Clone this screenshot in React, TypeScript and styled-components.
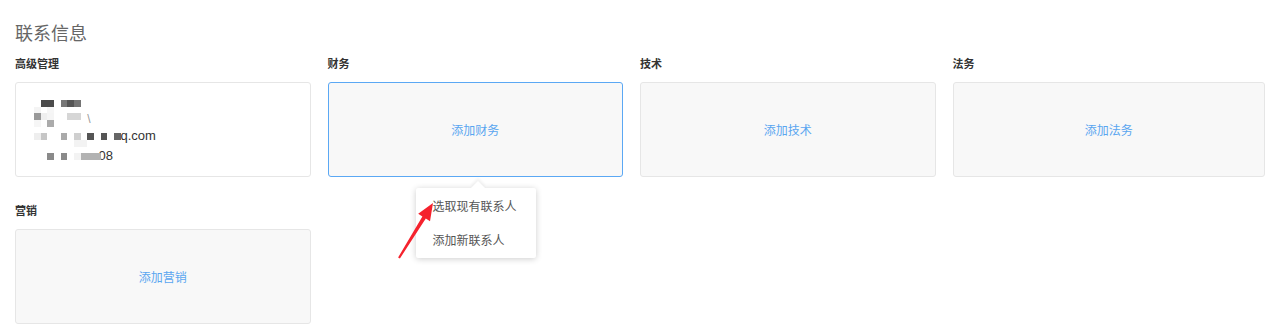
import React from "react";
import styled, { createGlobalStyle } from "styled-components";

const Global = createGlobalStyle`
  html, body { margin: 0; padding: 0; background: #fff; }
  body { font-family: "Noto Sans CJK SC", "Noto Sans", sans-serif; }
`;

const Page = styled.div`
  position: relative;
  padding: 20px 3px 0 15px;
  width: 1268px;
  height: 334px;
  box-sizing: border-box;
  overflow: hidden;
`;

const Title = styled.h2`
  margin: 0 0 10px;
  font-size: 18px;
  line-height: 24px;
  font-weight: 400;
  color: #666;
`;

const Grid = styled.div`
  display: grid;
  grid-template-columns: repeat(4, 1fr);
  row-gap: 24px;
`;

const Section = styled.section<{ $last?: boolean }>`
  padding-right: ${(p) => (p.$last ? "0" : "17px")};
`;

const Label = styled.div`
  font-size: 11px;
  line-height: 18px;
  font-weight: 700;
  color: #333;
  margin-bottom: 10px;
`;

const Card = styled.div<{ $active?: boolean; $plain?: boolean }>`
  position: relative;
  box-sizing: border-box;
  height: 95px;
  border: 1px solid ${(p) => (p.$active ? "#5ba8f4" : "#e6e6e6")};
  border-radius: 3px;
  background: ${(p) => (p.$plain ? "#fff" : "#f8f8f8")};
  display: flex;
  align-items: ${(p) => (p.$plain ? "flex-start" : "center")};
  justify-content: ${(p) => (p.$plain ? "flex-start" : "center")};
  padding: ${(p) => (p.$plain ? "17px 0 0 18px" : "0")};
`;

const AddText = styled.span`
  font-size: 12px;
  color: #5aa6f0;
  cursor: pointer;
`;

const Mosaic = styled.div`
  display: grid;
  grid-template-columns: repeat(20, 6.667px);
  grid-template-rows: repeat(10, 6.667px);
`;

const Cell = styled.span<{ $c: string }>`
  background: ${(p) => p.$c};
`;

const MaskText = styled.span<{ $shift?: number }>`
  font-family: "Liberation Sans", Arial, sans-serif;
  font-size: 13px;
  line-height: 6.667px;
  white-space: nowrap;
  color: #333;
  margin-left: ${(p) => p.$shift ?? 0}px;
`;

const Stroke = styled.span`
  font-family: "Liberation Sans", Arial, sans-serif;
  font-size: 12px;
  line-height: 13px;
  color: #999;
`;

const Popover = styled.div`
  position: absolute;
  left: 87px;
  top: 105px;
  width: 120px;
  padding: 1px 0;
  background: #fff;
  border-radius: 2px;
  box-shadow: 0 1px 6px rgba(0, 0, 0, 0.2);
  z-index: 5;
  &::before {
    content: "";
    position: absolute;
    top: -5px;
    left: 57px;
    width: 10px;
    height: 10px;
    background: #fff;
    transform: rotate(45deg);
    box-shadow: -2px -2px 3px rgba(0, 0, 0, 0.06);
  }
`;

const MenuItem = styled.div`
  position: relative;
  height: 34px;
  line-height: 34px;
  padding-left: 17px;
  font-size: 12px;
  color: #555;
  cursor: pointer;
  white-space: nowrap;
`;

const Pointer = styled.svg`
  position: absolute;
  left: 395px;
  top: 198px;
  z-index: 10;
`;

type C = [number, number, number, string];
const cells: C[] = [
  [0, 1, 2, "#4b4b4b"],
  [0, 4, 1, "#777"],
  [0, 5, 1, "#555"],
  [0, 6, 1, "#747474"],
  [1, 0, 1, "#f4f4f4"],
  [1, 2, 1, "#f6f6f6"],
  [2, 0, 1, "#999"],
  [2, 1, 1, "#efefef"],
  [2, 2, 1, "#f5f5f5"],
  [2, 5, 2, "#d6d6d6"],
  [3, 0, 1, "#f6f6f6"],
  [3, 2, 1, "#ababab"],
  [5, 0, 1, "#eee"],
  [5, 1, 1, "#c6c6c6"],
  [5, 4, 1, "#aaa"],
  [5, 6, 1, "#cfcfcf"],
  [5, 8, 1, "#555"],
  [5, 10, 1, "#555"],
  [5, 12, 1, "#666"],
  [6, 6, 2, "#f3f3f3"],
  [8, 2, 1, "#8a8a8a"],
  [8, 4, 1, "#8a8a8a"],
  [8, 6, 1, "#f3f3f3"],
  [8, 7, 3, "#b2b2b2"],
];

const groups = [
  { label: "财务", add: "添加财务" },
  { label: "技术", add: "添加技术" },
  { label: "法务", add: "添加法务" },
];

export default function App() {
  return (
    <Page>
      <Global />
      <Title>联系信息</Title>
      <Grid>
        <Section>
          <Label>高级管理</Label>
          <Card $plain>
            <Mosaic>
              <MaskText style={{ gridColumn: "14 / span 6", gridRow: 6 }}>q.com</MaskText>
              <MaskText $shift={-2} style={{ gridColumn: "11 / span 4", gridRow: 9 }}>08</MaskText>
              <Stroke style={{ gridColumn: "9 / span 2", gridRow: "3 / span 2" }}>\</Stroke>
              {cells.map(([r, c, s, col], i) => (
                <Cell
                  key={i}
                  $c={col}
                  style={{ gridRow: r + 1, gridColumn: `${c + 1} / span ${s}` }}
                />
              ))}
            </Mosaic>
          </Card>
        </Section>
        {groups.map((g, i) => (
          <Section key={g.label} $last={i === 2}>
            <Label>{g.label}</Label>
            <Card $active={i === 0}>
              <AddText>{g.add}</AddText>
              {i === 0 && (
                <Popover>
                  <MenuItem>选取现有联系人</MenuItem>
                  <MenuItem>添加新联系人</MenuItem>
                </Popover>
              )}
            </Card>
          </Section>
        ))}
        <Section>
          <Label>营销</Label>
          <Card>
            <AddText>添加营销</AddText>
          </Card>
        </Section>
      </Grid>
      <Pointer width="45" height="65" viewBox="0 0 45 65">
        <polygon
          points="38,5 35,23.2 30.8,20.6 4.9,60.5 3.1,59.5 27.4,18.4 23.2,15.8"
          fill="#f5222d"
        />
      </Pointer>
    </Page>
  );
}
